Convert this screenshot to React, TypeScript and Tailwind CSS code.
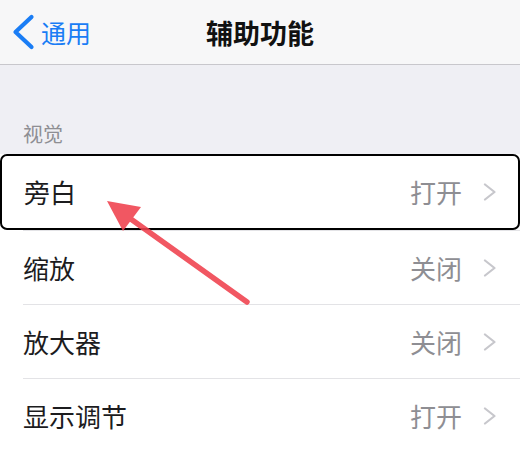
const rows = [
  { label: "旁白", value: "打开" },
  { label: "缩放", value: "关闭" },
  { label: "放大器", value: "关闭" },
  { label: "显示调节", value: "打开" },
];

function Chevron() {
  return (
    <svg width="14" height="18" viewBox="0 0 14 18" className="shrink-0">
      <polyline points="2,1.5 11.5,9 2,16.5" fill="none" stroke="#c7c7cc" strokeWidth="2.2" strokeLinecap="round" strokeLinejoin="round" />
    </svg>
  );
}

export default function App() {
  return (
    <div className="relative w-[520px] h-[450px] overflow-hidden bg-[#efeff4] font-['Noto_Sans_CJK_SC',sans-serif]">
      {/* Nav bar */}
      <div className="grid grid-cols-[1fr_auto_1fr] items-center h-[65px] bg-[#f7f7f8] border-b border-[#c8c7cc]">
        <div className="flex items-center pl-[11px] gap-[6px] text-[#1a7df5]">
          <svg width="24" height="36" viewBox="0 0 24 36">
            <polyline points="20.5,3 4.5,18 20.5,33" fill="none" stroke="#1a7df5" strokeWidth="4.2" strokeLinecap="round" strokeLinejoin="round" />
          </svg>
          <span className="text-[25px] leading-none">通用</span>
        </div>
        <div className="text-[27px] font-semibold text-[#111] leading-none">辅助功能</div>
        <div />
      </div>

      {/* Section header */}
      <div className="h-[89px] flex items-end pb-[10px] pl-[23px] text-[20px] leading-none text-[#8e8e93]">
        视觉
      </div>

      {/* List */}
      <div className="bg-white">
        {rows.map((r, i) => (
          <div
            key={r.label}
            className={
              i === 0
                ? "flex items-center justify-between h-[76px] pl-[22px] pr-[21px] border-2 border-black rounded-[7px]"
                : "flex items-center justify-between h-[74px] ml-[23px] pr-[23px] border-t border-[#e3e3e6]"
            }
          >
            <span className="text-[26px] leading-none text-[#1c1c1e]">{r.label}</span>
            <div className="flex items-center gap-[21px]">
              <span className="text-[26px] leading-none text-[#8e8e93]">{r.value}</span>
              <Chevron />
            </div>
          </div>
        ))}
      </div>

      {/* Annotation arrow */}
      <svg className="absolute inset-0 pointer-events-none" width="520" height="450" viewBox="0 0 520 450">
        <g opacity="0.88">
          <line x1="247" y1="302" x2="128" y2="217" stroke="#f0404d" strokeWidth="5.5" strokeLinecap="round" />
          <polygon points="107,201 141,207 123,231" fill="#f0404d" />
        </g>
      </svg>
    </div>
  );
}
